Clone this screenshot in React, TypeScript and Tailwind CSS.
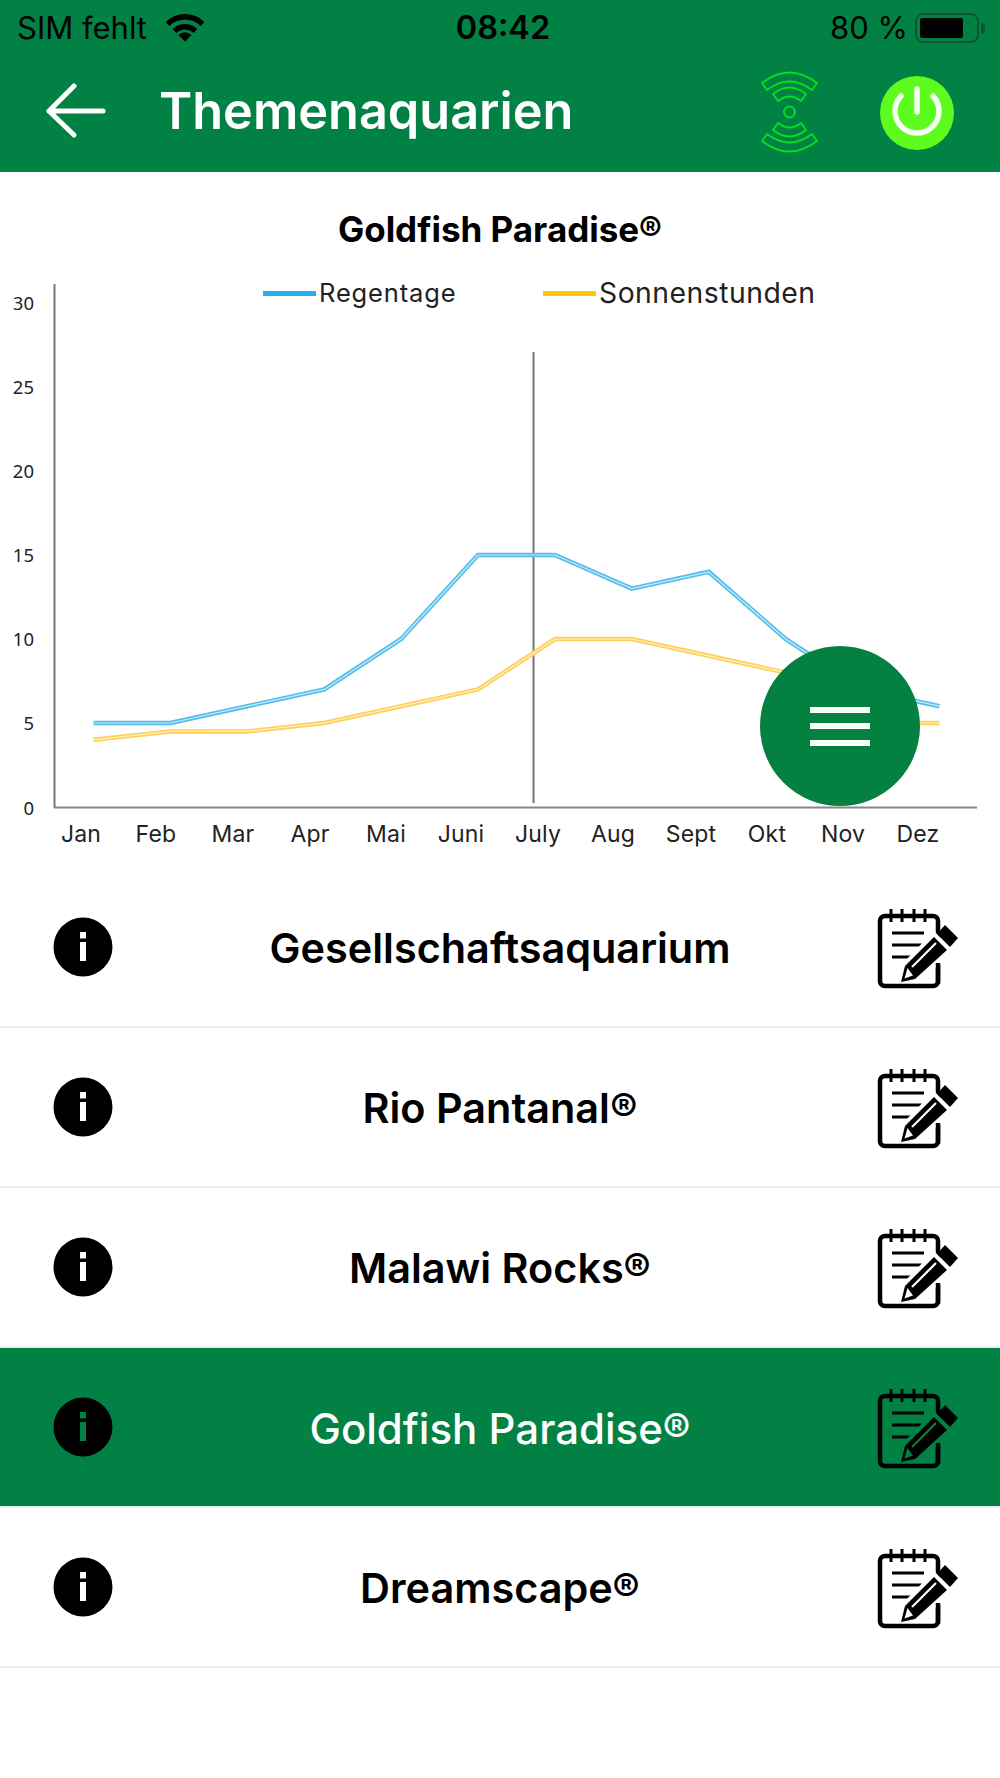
import React from "react";

const INTER = { fontFamily: "Inter, sans-serif" };
const blue = [5, 5, 6, 7, 10, 15, 15, 13, 14, 10, 7, 6];
const yellow = [4, 4.5, 4.5, 5, 6, 7, 10, 10, 9, 8, 5, 5];
const pts = (d: number[]) =>
  d.map((v, i) => `${93.5 + i * 76.9},${807 - v * 16.8}`).join(" ");
const months = ["Jan", "Feb", "Mar", "Apr", "Mai", "Juni", "July", "Aug", "Sept", "Okt", "Nov", "Dez"];
const monthX = [81, 156, 233, 310, 386, 461, 538, 613, 691, 767, 843, 918];

function Chart() {
  return (
    <svg width="1000" height="596" viewBox="0 272 1000 596" className="block">
      <line x1="54.5" y1="284" x2="54.5" y2="808" stroke="#777" strokeWidth="2" />
      <line x1="54" y1="807.5" x2="977" y2="807.5" stroke="#888" strokeWidth="2" />
      <line x1="533.5" y1="352" x2="533.5" y2="803" stroke="#777" strokeWidth="2" />
      {[0, 5, 10, 15, 20, 25, 30].map((v) => (
        <text key={v} x="34" y={814.5 - v * 16.82} textAnchor="end" fontSize="18.5" fill="#222" fontFamily="'Noto Sans', sans-serif">
          {v}
        </text>
      ))}
      {months.map((m, i) => (
        <text key={m} x={monthX[i]} y="842" textAnchor="middle" fontSize="23" letterSpacing="0.2" fill="#222" fontFamily="Inter, sans-serif">
          {m}
        </text>
      ))}
      <rect x="263" y="291" width="53" height="5" fill="#22b0ee" />
      <text x="319" y="302" fontSize="25.5" letterSpacing="0.85" fill="#222" fontFamily="Inter, sans-serif">Regentage</text>
      <rect x="543" y="291" width="53" height="5" fill="#ffc510" />
      <text x="599" y="303" fontSize="28.3" letterSpacing="0.5" fill="#222" fontFamily="Inter, sans-serif">Sonnenstunden</text>
      <polyline points={pts(blue)} fill="none" stroke="#55bdea" strokeWidth="4.5" />
      <polyline points={pts(blue)} fill="none" stroke="#c8ecfa" strokeWidth="1.2" />
      <polyline points={pts(yellow)} fill="none" stroke="#ffd058" strokeWidth="4.5" />
      <polyline points={pts(yellow)} fill="none" stroke="#fff0c8" strokeWidth="1.2" />
    </svg>
  );
}

function InfoIcon({ green }: { green?: boolean }) {
  const c = green ? "#018244" : "#fff";
  return (
    <svg width="60" height="60" viewBox="0 0 60 60" className="block">
      <circle cx="30" cy="30" r="29.5" fill="#000" />
      <rect x="27" y="15" width="6" height="6.5" fill={c} />
      <rect x="27" y="25" width="6" height="19" fill={c} />
    </svg>
  );
}

function NoteIcon({ bg }: { bg: string }) {
  return (
    <svg width="120" height="110" viewBox="0 0 120 110" className="block">
      <rect x="30" y="25" width="58" height="70" rx="5" fill="none" stroke="#000" strokeWidth="4.5" />
      {[41, 52, 64, 75].map((x) => (
        <line key={x} x1={x} y1="18" x2={x} y2="31" stroke="#000" strokeWidth="3" />
      ))}
      <line x1="42" y1="42" x2="74" y2="42" stroke="#000" strokeWidth="3" />
      <line x1="42" y1="54" x2="74" y2="54" stroke="#000" strokeWidth="3" />
      <line x1="42" y1="66" x2="68" y2="66" stroke="#000" strokeWidth="3" />
      <polygon points="84,40 103,59 93,72 66,92 50,92 50,75" fill={bg} />
      <rect x="85.75" y="72" width="4.5" height="21" fill="#000" />
      <polygon points="84,46 97,59 65,88 51,91 55,75" fill="#000" />
      <polygon points="57.5,77 63,84.5 54.5,87.5" fill={bg} />
      <line x1="62" y1="76" x2="86" y2="52" stroke={bg} strokeWidth="2.2" />
      <polygon points="95,34 108,47 100,56 87,43" fill="#000" />
    </svg>
  );
}

function Row({ label, active }: { label: string; active?: boolean }) {
  return (
    <div
      className={
        active
          ? "h-[160px] flex items-center bg-[#018244] text-white border-b-2 border-[#ececec]"
          : "h-[160px] flex items-center bg-white text-black border-b-2 border-[#ececec]"
      }
    >
      <div className="w-[150px] pl-[53px] shrink-0">
        <InfoIcon green={active} />
      </div>
      <div className={active ? "flex-1 text-center text-[42px] font-medium pt-[3px]" : "flex-1 text-center text-[41.4px] font-semibold pt-[3px]"}>
        {label}
      </div>
      <div className="w-[150px] shrink-0 pb-[2px]">
        <NoteIcon bg={active ? "#018244" : "#fff"} />
      </div>
    </div>
  );
}

function WifiStatus() {
  return (
    <svg width="38" height="28" viewBox="0 0 38 28" className="block">
      <path d="M1.5 10 A25 25 0 0 1 36.5 10" fill="none" stroke="#000" strokeWidth="5.5" />
      <path d="M8.5 17 A15 15 0 0 1 29.5 17" fill="none" stroke="#000" strokeWidth="5.5" />
      <path d="M19 27.5 L12.5 21 A9 9 0 0 1 25.5 21 Z" fill="#000" />
    </svg>
  );
}

function Radio() {
  const c = "#00e01c";
  return (
    <svg width="60" height="84" viewBox="760 70 60 84" className="block">
      <g fill="none" stroke={c} strokeWidth="2" strokeLinejoin="round">
        <path d="M762 83 Q789.5 62 817 83 L812 90 Q789.5 73 767 90 Z" />
        <path d="M773 94 Q789.5 81 806 94 L801 101 Q789.5 92 778 101 Z" />
        <circle cx="789.5" cy="112" r="5.5" />
        <path d="M773 130 Q789.5 143 806 130 L801 123 Q789.5 132 778 123 Z" />
        <path d="M762 141 Q789.5 162 817 141 L812 134 Q789.5 151 767 134 Z" />
      </g>
    </svg>
  );
}

function Power() {
  return (
    <svg width="74" height="74" viewBox="0 0 74 74" className="block">
      <circle cx="37" cy="37" r="37" fill="#5efb1e" />
      <path d="M21 20 A22 22 0 1 0 53 20" fill="none" stroke="#f2fff0" strokeWidth="5.5" strokeLinecap="round" />
      <line x1="37" y1="13" x2="37" y2="36" stroke="#f2fff0" strokeWidth="5.5" strokeLinecap="round" />
    </svg>
  );
}

function Back() {
  return (
    <svg width="62" height="56" viewBox="0 0 62 56" className="block">
      <path d="M58 28 H4 M29 3 L4 28 L29 52" fill="none" stroke="#fff" strokeWidth="5" strokeLinecap="round" strokeLinejoin="round" />
    </svg>
  );
}

function Battery() {
  return (
    <div className="flex items-center">
      <div className="w-[64px] h-[30px] rounded-[8px] border-2 border-[#0b5630] p-[3px] pr-[14px]">
        <div className="w-full h-full bg-black rounded-[2px]" />
      </div>
      <div className="w-[4px] h-[11px] ml-[2px] bg-[#0b5630] rounded-r-[4px]" />
    </div>
  );
}

export default function App() {
  return (
    <div className="relative w-[1000px] h-[1778px] bg-white overflow-hidden" style={INTER}>
      <header className="h-[172px] bg-[#018244] flex flex-col">
        <div className="h-[56px] flex items-center justify-between pl-[17px] pr-[15px] text-black">
          <div className="flex items-center gap-[19px] text-[31px] w-[300px]">
            <span>SIM fehlt</span>
            <WifiStatus />
          </div>
          <div className="text-[32.5px] font-semibold ml-[4px]">08:42</div>
          <div className="flex items-center justify-end gap-[7px] text-[31px] w-[300px]">
            <span>80 %</span>
            <Battery />
          </div>
        </div>
        <div className="flex-1 flex items-center pl-[45px] pr-[46px] pb-[6px]">
          <Back />
          <div className="ml-[52px] flex-1 text-white text-[50.4px] font-semibold">Themenaquarien</div>
          <div className="mr-[60px] mt-[2px]">
            <Radio />
          </div>
          <div className="mt-[3px]">
            <Power />
          </div>
        </div>
      </header>
      <div className="h-[100px] flex items-end justify-center pb-[21px]">
        <div className="text-[35px] font-bold text-black leading-[44px]">Goldfish Paradise®</div>
      </div>
      <Chart />
      <Row label="Gesellschaftsaquarium" />
      <Row label="Rio Pantanal®" />
      <Row label="Malawi Rocks®" />
      <Row label="Goldfish Paradise®" active />
      <Row label="Dreamscape®" />
      <button className="absolute left-[760px] top-[646px] w-[160px] h-[160px] rounded-full bg-[#048040] flex flex-col items-center justify-center gap-[10.5px]">
        <span className="block w-[60px] h-[6px] bg-white" />
        <span className="block w-[60px] h-[6px] bg-white" />
        <span className="block w-[60px] h-[6px] bg-white" />
      </button>
    </div>
  );
}
